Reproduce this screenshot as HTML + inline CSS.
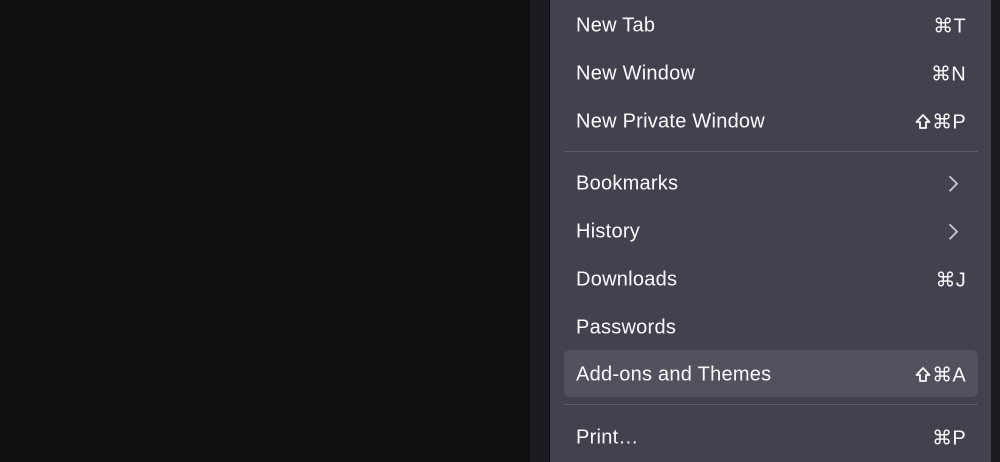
<!DOCTYPE html>
<html><head><meta charset="utf-8"><style>
html,body{margin:0;padding:0;width:1000px;height:462px;overflow:hidden;background:#0f0f12;font-family:"Liberation Sans",sans-serif;}
.strip{position:absolute;left:530px;top:0;width:19px;height:462px;background:#1c1b22;}
.rstrip{position:absolute;left:991px;top:0;width:9px;height:462px;background:#1c1b22;}
.panel{position:absolute;left:550px;top:0;width:441px;height:462px;background:#42414d;}
.item{position:absolute;left:14px;width:414px;height:47px;color:#fbfbfe;font-size:20px;letter-spacing:0.25px;}
.item .l{position:absolute;left:12px;top:50%;transform:translateY(-46%);}
.item .r{position:absolute;right:12px;top:50%;transform:translateY(-46%);display:flex;align-items:center;}
.hl{background:#52525e;border-radius:6px;}
.sep{position:absolute;left:14px;width:414px;height:1px;background:#5b5a66;}
svg{display:block}
</style></head><body>
<div class="strip"></div><div class="rstrip"></div>
<div class="panel">
<div class="item" style="top:1px"><span class="l">New Tab</span><span class="r">⌘T</span></div>
<div class="item" style="top:49px"><span class="l">New Window</span><span class="r">⌘N</span></div>
<div class="item" style="top:97px"><span class="l">New Private Window</span><span class="r"><svg width="16" height="16" viewBox="0 0 16 16" style="margin-right:1px"><path d="M8 1.5L14.5 8.5H11V14.5H5V8.5H1.5Z" fill="none" stroke="#fbfbfe" stroke-width="1.8" stroke-linejoin="round"/></svg>⌘P</span></div>
<div class="sep" style="top:151px"></div>
<div class="item" style="top:159px"><span class="l">Bookmarks</span><span class="r" style="right:19px"><svg width="11" height="18" viewBox="0 0 11 18"><path d="M1.5 1.5L9 9L1.5 16.5" fill="none" stroke="#c8c8cf" stroke-width="1.8"/></svg></span></div>
<div class="item" style="top:207px"><span class="l">History</span><span class="r" style="right:19px"><svg width="11" height="18" viewBox="0 0 11 18"><path d="M1.5 1.5L9 9L1.5 16.5" fill="none" stroke="#c8c8cf" stroke-width="1.8"/></svg></span></div>
<div class="item" style="top:255px"><span class="l">Downloads</span><span class="r">⌘J</span></div>
<div class="item" style="top:303px"><span class="l">Passwords</span></div>
<div class="item hl" style="top:350px"><span class="l">Add-ons and Themes</span><span class="r"><svg width="16" height="16" viewBox="0 0 16 16" style="margin-right:1px"><path d="M8 1.5L14.5 8.5H11V14.5H5V8.5H1.5Z" fill="none" stroke="#fbfbfe" stroke-width="1.8" stroke-linejoin="round"/></svg>⌘A</span></div>
<div class="sep" style="top:404px"></div>
<div class="item" style="top:413px"><span class="l">Print…</span><span class="r">⌘P</span></div>
</div>
</body></html>
